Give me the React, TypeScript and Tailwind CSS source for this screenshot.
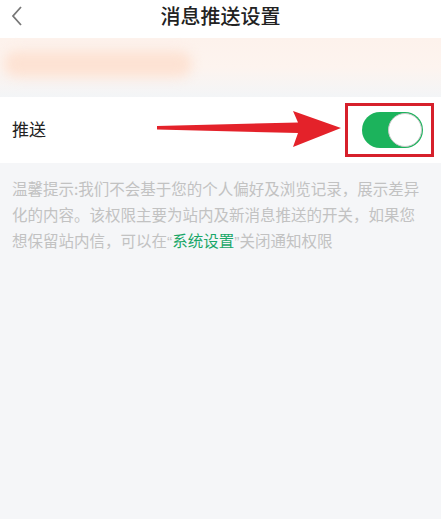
const Toggle = () => (
  <div className="relative w-[61px] h-[36px] rounded-full bg-[#1cb35c]">
    <div className="absolute right-[1px] top-[1px] w-[34px] h-[34px] rounded-full bg-white border border-[#c9c9c9]" />
  </div>
);

const Arrow = () => (
  <svg
    className="absolute left-[156px] top-[110px]"
    width="188"
    height="38"
    viewBox="0 0 188 38"
  >
    <path d="M1 16 L142 12.5 L137 1 L185 18 L137 37 L142 23 L1 19.5 Z" fill="#e4222a" />
  </svg>
);

const narrow = { fontFamily: '"Liberation Sans", sans-serif' };

export default function App() {
  return (
    <div
      className="relative w-[441px] h-[519px] bg-[#f5f6f8] overflow-hidden"
      style={{ fontFamily: '"Noto Sans CJK SC", "Noto Sans", sans-serif' }}
    >
      <header className="relative h-[38px] bg-white flex items-center justify-center">
        <svg
          className="absolute left-[10px] top-[5px]"
          width="14"
          height="22"
          viewBox="0 0 14 22"
          fill="none"
          stroke="#777"
          strokeWidth="1.8"
        >
          <path d="M11 2 L3 11 L11 20" />
        </svg>
        <h1 className="text-[20px] text-[#222] leading-none -mt-[7px] font-medium">消息推送设置</h1>
      </header>

      <div className="h-[59px] bg-gradient-to-b from-[#fdf2ec] via-[#fdf4ef] to-[#f3f5f7] relative">
        <div className="absolute left-[4px] top-[13px] w-[188px] h-[26px] rounded-full bg-[#fde2d3] blur-[6px]" />
      </div>

      <div className="h-[66px] bg-white flex items-center justify-between pl-[12px] pr-[7px]">
        <span className="text-[17px] text-[#222] -mt-[2px]">推送</span>
        <div className="w-[89px] h-[54px] border-[3px] border-[#d6202b] flex items-center justify-end pr-[8px]">
          <Toggle />
        </div>
      </div>

      <p className="pl-[12px] pr-[16px] pt-[12px] text-[15.5px] leading-[26px] text-[#c2c2c2]">
        温馨提示:我们不会基于您的个人偏好及浏览记录，展示差异化的内容。该权限主要为站内及新消息推送的开关，如果您想保留站内信，可以在<span style={narrow}>“</span><span className="text-[#1aa768]">系统设置</span><span style={narrow}>”</span>关闭通知权限
      </p>

      <Arrow />
    </div>
  );
}
